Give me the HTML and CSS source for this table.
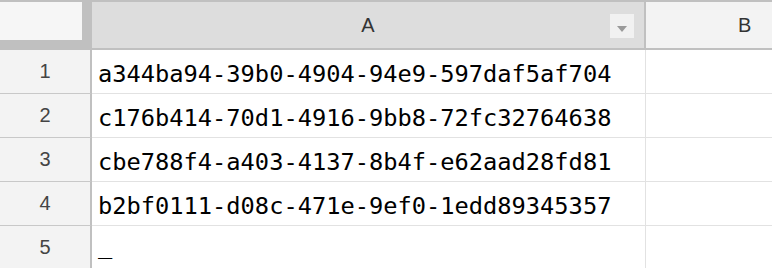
FILE: index.html
```html
<!DOCTYPE html>
<html lang="en">
<head>
    <meta charset="UTF-8">
    <title>Sheet</title>
    <link rel="stylesheet" href="styles.css">
</head>
<body>
    <div class="sheet">
        <!-- Header row -->
        <div class="corner"><div class="corner-inner"></div></div>
        <div class="col-head col-selected">
            A
            <span class="filter-btn">
                <svg width="10" height="6" viewBox="0 0 10 6"><polygon points="0,0 10,0 5,6" fill="#9a9a9a"/></svg>
            </span>
        </div>
        <div class="col-head col-clipped">B</div>

        <!-- Rows -->
        <div class="row-head">1</div>
        <div class="cell cell-a">a344ba94-39b0-4904-94e9-597daf5af704</div>
        <div class="cell"></div>

        <div class="row-head">2</div>
        <div class="cell cell-a">c176b414-70d1-4916-9bb8-72fc32764638</div>
        <div class="cell"></div>

        <div class="row-head">3</div>
        <div class="cell cell-a">cbe788f4-a403-4137-8b4f-e62aad28fd81</div>
        <div class="cell"></div>

        <div class="row-head">4</div>
        <div class="cell cell-a">b2bf0111-d08c-471e-9ef0-1edd89345357</div>
        <div class="cell"></div>

        <div class="row-head">5</div>
        <div class="cell cell-a cell-editing">_</div>
        <div class="cell"></div>
    </div>
</body>
</html>
```

FILE: styles.css
```css
:root {
    --head-bg: #f3f3f3;
    --head-selected: #dddddd;
    --head-border: #c0c0c0;
    --grid-line: #e2e2e2;
    --row-line: #c8c8c8;
}

* {
    margin: 0;
    padding: 0;
    box-sizing: border-box;
}

body {
    background: #ffffff;
    overflow: hidden;
}

.sheet {
    display: grid;
    grid-template-columns: 92px 554px 1fr;
    grid-template-rows: 50px repeat(5, 44px);
}

.corner {
    background: var(--head-border);
    padding: 2px 10px 10px 0;
}

.corner-inner {
    background: #f6f6f6;
    height: 100%;
}

.col-head {
    position: relative;
    display: flex;
    align-items: center;
    justify-content: center;
    background: var(--head-bg);
    border-top: 2px solid var(--head-border);
    border-bottom: 2px solid var(--head-border);
    font-family: "Liberation Sans", Arial, sans-serif;
    font-size: 20px;
    color: #333333;
}

.col-selected {
    background: var(--head-selected);
    border-right: 2px solid var(--head-border);
}

/* column B runs off the right edge, so its label sits where the full column's centre would be */
.col-clipped {
    justify-content: flex-start;
    padding-left: 92px;
}

.filter-btn {
    position: absolute;
    right: 10px;
    top: 12px;
    width: 24px;
    height: 24px;
    background: #f1f1f1;
    display: flex;
    align-items: center;
    justify-content: center;
}

.filter-btn svg {
    margin-top: 6px;
}

.row-head {
    display: flex;
    align-items: center;
    justify-content: center;
    background: var(--head-bg);
    border-right: 2px solid var(--head-border);
    border-bottom: 1px solid var(--row-line);
    font-family: "Liberation Sans", Arial, sans-serif;
    font-size: 20px;
    color: #444444;
}

.cell {
    border-bottom: 1px solid var(--grid-line);
    font-family: "DejaVu Sans Mono", monospace;
    font-size: 23.7px;
    line-height: 28px;
    padding: 10px 0 0 6px;
    color: #000000;
    white-space: nowrap;
}

.cell-a {
    border-right: 1px solid var(--grid-line);
}

.cell-editing {
    padding-top: 5px;
}
```
